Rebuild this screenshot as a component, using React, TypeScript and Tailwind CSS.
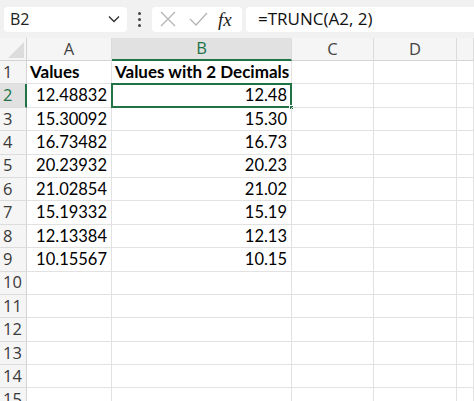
import React from "react";

const cols = [
  { key: "A", w: "w-[85px]" },
  { key: "B", w: "w-[180px]" },
  { key: "C", w: "w-[82px]" },
  { key: "D", w: "w-[83px]" },
  { key: "E", w: "flex-1" },
];

const rows: [string, string][] = [
  ["12.48832", "12.48"],
  ["15.30092", "15.30"],
  ["16.73482", "16.73"],
  ["20.23932", "20.23"],
  ["21.02854", "21.02"],
  ["15.19332", "15.19"],
  ["12.13384", "12.13"],
  ["10.15567", "10.15"],
];

const cellFont = { fontFamily: "Lato, 'Open Sans', sans-serif" };
const uiFont = { fontFamily: "'Open Sans', 'Noto Sans', sans-serif" };

function Row({ n }: { n: number }) {
  const selected = n === 2;
  let a = "";
  let b = "";
  let bold = false;
  if (n === 1) {
    a = "Values";
    b = "Values with 2 Decimals";
    bold = true;
  } else if (n <= 9) {
    a = rows[n - 2][0];
    b = rows[n - 2][1];
  }
  return (
    <div className="flex h-[23.4px] shrink-0">
      <div
        className={`w-[27px] shrink-0 flex items-center pl-[3px] text-[16.5px] text-[#3a3a3a] border-b border-[#dcdcdc] ${
          selected ? "bg-[#e1e1e1] border-r-2 border-r-[#217346] text-[#217346]" : "bg-[#f5f5f5] border-r border-r-[#d4d4d4]"
        }`}
        style={uiFont}
      >
        {n}
      </div>
      {cols.map((c) => {
        const isA = c.key === "A";
        const isB = c.key === "B";
        const text = isA ? a : isB ? b : "";
        return (
          <div
            key={c.key}
            className={`${c.w} shrink-0 relative flex items-center border-r border-b border-[#e2e2e2] text-black ${
              bold ? "justify-start pl-[3px] font-bold text-[17px]" : "justify-end pr-[4px] text-[16.5px]"
            }`}
            style={cellFont}
          >
            {text}
            {selected && isB && (
              <>
                <div className="absolute -left-[1px] -top-[1px] -right-[1px] -bottom-[1px] border-2 border-[#217346]" />
                <div className="absolute -right-[3px] -bottom-[3px] w-[5px] h-[5px] bg-[#217346] border border-white" />
              </>
            )}
          </div>
        );
      })}
    </div>
  );
}

export default function App() {
  return (
    <div className="w-[474px] h-[401px] overflow-hidden bg-white flex flex-col">
      <div className="h-[38px] shrink-0 bg-[#f1f1f1] flex items-center pl-[4px]">
        <div className="w-[123px] h-[25px] bg-white rounded-[4px] flex items-center justify-between pl-[6px] pr-[6px]">
          <span className="text-[16px] text-[#222]" style={uiFont}>B2</span>
          <svg width="12" height="8" viewBox="0 0 12 8" className="mr-[1px]">
            <path d="M1 1.5 L6 6.5 L11 1.5" fill="none" stroke="#333" strokeWidth="1.4" />
          </svg>
        </div>
        <div className="w-[25px] flex flex-col items-center gap-[3px]">
          <span className="w-[3px] h-[3px] rounded-full bg-[#444]" />
          <span className="w-[3px] h-[3px] rounded-full bg-[#444]" />
          <span className="w-[3px] h-[3px] rounded-full bg-[#444]" />
        </div>
        <div className="w-[90px] h-[25px] bg-white rounded-[4px] flex items-center pl-[7px]">
          <svg width="18" height="18" viewBox="0 0 18 18">
            <path d="M2 2 L16 16 M16 2 L2 16" stroke="#b4b4b4" strokeWidth="1.3" fill="none" />
          </svg>
          <svg width="20" height="18" viewBox="0 0 20 18" className="ml-[11px]">
            <path d="M2 9 L8 15 L19 3" stroke="#b4b4b4" strokeWidth="1.3" fill="none" />
          </svg>
          <span
            className="ml-[10px] text-[19px] italic text-[#222] leading-none"
            style={{ fontFamily: "'Liberation Serif', 'DejaVu Serif', serif" }}
          >
            fx
          </span>
        </div>
        <div className="ml-[4px] flex-1 h-[25px] bg-white rounded-l-[4px] flex items-center pl-[12px]">
          <span className="text-[17px] text-[#111]" style={uiFont}>=TRUNC(A2, 2)</span>
        </div>
      </div>
      <div className="flex h-[23px] shrink-0 bg-[#f5f5f5]">
        <div className="w-[27px] shrink-0 relative border-r border-b border-[#d4d4d4]">
          <div className="absolute right-[2px] bottom-[2px] w-0 h-0 border-l-[16px] border-l-transparent border-b-[16px] border-b-[#dcdcdc]" />
        </div>
        {cols.map((c) => {
          const sel = c.key === "B";
          return (
            <div
              key={c.key}
              className={`${c.w} shrink-0 flex items-center justify-center text-[16.5px] border-r border-[#dcdcdc] ${
                sel ? "bg-[#e1e1e1] text-[#217346] border-b-2 border-b-[#217346]" : "text-[#444] border-b border-b-[#d4d4d4]"
              }`}
              style={uiFont}
            >
              {c.key === "E" ? "" : c.key}
            </div>
          );
        })}
      </div>
      {Array.from({ length: 15 }, (_, i) => (
        <Row key={i} n={i + 1} />
      ))}
    </div>
  );
}
